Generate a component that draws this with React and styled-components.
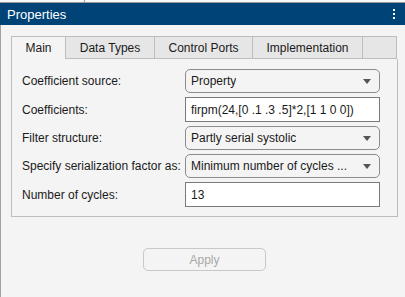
import React, { useState } from "react";
import styled, { createGlobalStyle } from "styled-components";

const GlobalStyle = createGlobalStyle`
  html, body {
    margin: 0;
    padding: 0;
    background: #f4f4f4;
    font-family: "Liberation Sans", Arial, sans-serif;
  }
`;

const Page = styled.div`
  width: 405px;
  height: 297px;
  display: flex;
  flex-direction: column;
  background: #f4f4f4;
  overflow: hidden;
`;

const TopStrip = styled.div`
  height: 2px;
  display: flex;
  background: #f8f8f8;
  border-bottom: 1px solid #9a9a9a;
  div {
    width: 84px;
    border-right: 1px solid #9a9a9a;
  }
`;

const Header = styled.div`
  height: 22px;
  background: #004477;
  color: #ffffff;
  display: flex;
  align-items: center;
  justify-content: space-between;
  padding: 0 10px 0 7px;
  font-size: 13px;
`;

const Kebab = styled.div`
  display: flex;
  flex-direction: column;
  gap: 2px;
  span {
    width: 2px;
    height: 2px;
    background: #ffffff;
  }
`;

const Body = styled.div`
  flex: 1;
  border-left: 1px solid #a0a0a0;
  padding: 11px 7px 0 10px;
  display: flex;
  flex-direction: column;
`;

const TabBar = styled.div`
  display: flex;
  height: 23px;
`;

const Tab = styled.div`
  width: ${(p) => p.$w}px;
  box-sizing: border-box;
  display: flex;
  align-items: center;
  justify-content: center;
  font-size: 12px;
  color: #1a1a1a;
  background: ${(p) => (p.$active ? "#f4f4f4" : "#e6e6e6")};
  border: 1px solid #bdbdbd;
  border-left: ${(p) => (p.$first ? "1px solid #bdbdbd" : "none")};
  border-bottom: ${(p) => (p.$active ? "none" : "1px solid #bdbdbd")};
  cursor: pointer;
`;

const TabContent = styled.div`
  border: 1px solid #bdbdbd;
  border-top: none;
  padding: 10px 16px 9px 10px;
  display: grid;
  grid-template-columns: 163px 195px;
  row-gap: 4px;
  align-items: center;
`;

const Label = styled.div`
  font-size: 12px;
  color: #1a1a1a;
  white-space: nowrap;
`;

const Select = styled.div`
  height: 24px;
  box-sizing: border-box;
  border: 1px solid #8c8c8c;
  border-radius: 5px;
  background: #f4f4f4;
  display: flex;
  align-items: center;
  justify-content: space-between;
  padding: 0 8px 0 5px;
  font-size: 12px;
  color: #1a1a1a;
  span {
    white-space: nowrap;
    overflow: hidden;
  }
`;

const Arrow = styled.i`
  width: 0;
  height: 0;
  border-left: 4px solid transparent;
  border-right: 4px solid transparent;
  border-top: 5px solid #555555;
`;

const Edit = styled.div`
  height: 25px;
  box-sizing: border-box;
  border: 1px solid #7a7a7a;
  background: #ffffff;
  display: flex;
  align-items: center;
  padding: 0 5px;
  font-size: 12px;
  color: #1a1a1a;
  white-space: nowrap;
`;

const ButtonRow = styled.div`
  display: flex;
  justify-content: center;
  padding-top: 31px;
`;

const ApplyButton = styled.div`
  width: 123px;
  height: 23px;
  box-sizing: border-box;
  border: 1px solid #c8c8c8;
  border-radius: 5px;
  display: flex;
  align-items: center;
  justify-content: center;
  font-size: 12px;
  color: #a8a8a8;
`;

const tabs = [
  { name: "Main", w: 55 },
  { name: "Data Types", w: 89 },
  { name: "Control Ports", w: 98 },
  { name: "Implementation", w: 110 },
  { name: "", w: 34 },
];

const rows = [
  { label: "Coefficient source:", type: "select", value: "Property" },
  { label: "Coefficients:", type: "edit", value: "firpm(24,[0 .1 .3 .5]*2,[1 1 0 0])" },
  { label: "Filter structure:", type: "select", value: "Partly serial systolic" },
  { label: "Specify serialization factor as:", type: "select", value: "Minimum number of cycles ..." },
  { label: "Number of cycles:", type: "edit", value: "13" },
];

export default function App() {
  const [active, setActive] = useState(0);

  return (
    <>
      <GlobalStyle />
      <Page>
        <TopStrip>
          <div />
        </TopStrip>
        <Header>
          <span>Properties</span>
          <Kebab>
            <span />
            <span />
            <span />
          </Kebab>
        </Header>
        <Body>
          <TabBar>
            {tabs.map((t, i) => (
              <Tab
                key={i}
                $w={t.w}
                $first={i === 0}
                $active={i === active}
                onClick={() => t.name && setActive(i)}
              >
                {t.name}
              </Tab>
            ))}
          </TabBar>
          <TabContent>
            {rows.map((r) => (
              <React.Fragment key={r.label}>
                <Label>{r.label}</Label>
                {r.type === "select" ? (
                  <Select>
                    <span>{r.value}</span>
                    <Arrow />
                  </Select>
                ) : (
                  <Edit>{r.value}</Edit>
                )}
              </React.Fragment>
            ))}
          </TabContent>
          <ButtonRow>
            <ApplyButton>Apply</ApplyButton>
          </ButtonRow>
        </Body>
      </Page>
    </>
  );
}
